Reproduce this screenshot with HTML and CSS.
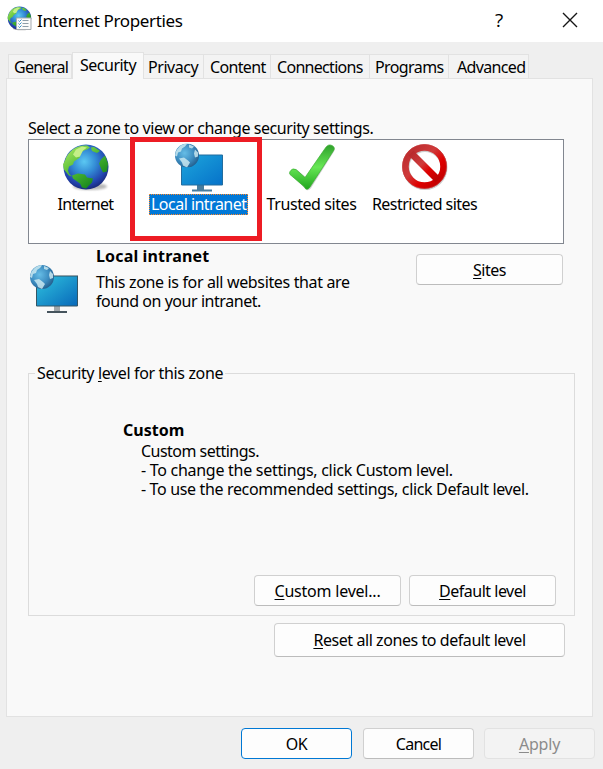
FILE: index.html
```html
<!DOCTYPE html>
<html lang="en">
<head>
<meta charset="utf-8">
<title>Internet Properties</title>
<link rel="stylesheet" href="styles.css">
</head>
<body>
<svg width="0" height="0" class="defs" aria-hidden="true">
  <defs>
    <radialGradient id="ocean" cx=".46" cy=".38" r=".65"><stop offset="0" stop-color="#5bc8f2"/><stop offset=".4" stop-color="#338bd5"/><stop offset=".78" stop-color="#2142ad"/><stop offset="1" stop-color="#18256f"/></radialGradient>
    <linearGradient id="land" x2=".8" y2="1"><stop offset="0" stop-color="#b4ed67"/><stop offset=".5" stop-color="#4cb832"/><stop offset="1" stop-color="#087817"/></linearGradient>
    <radialGradient id="pale" cx=".4" cy=".4" r=".65"><stop offset="0" stop-color="#66bde6"/><stop offset=".6" stop-color="#3c8cc0"/><stop offset="1" stop-color="#235d8b"/></radialGradient>
    <linearGradient id="screen" x2="1" y2="1"><stop offset="0" stop-color="#2fc3df"/><stop offset="1" stop-color="#0868b9"/></linearGradient>
    <linearGradient id="screenSelected" x2="1" y2="1"><stop offset="0" stop-color="#1da6dc"/><stop offset="1" stop-color="#0672c9"/></linearGradient>
    <linearGradient id="tick" x2="0" y2="1"><stop offset="0" stop-color="#30a12c"/><stop offset=".5" stop-color="#67e755"/><stop offset="1" stop-color="#20a51d"/></linearGradient>
    <linearGradient id="red" x2="1" y2="1"><stop offset="0" stop-color="#b7292c"/><stop offset=".4" stop-color="#cf3b3b"/><stop offset=".65" stop-color="#df0000"/><stop offset="1" stop-color="#b90000"/></linearGradient>
    <filter id="soft" x="-20%" y="-100%" width="140%" height="300%"><feGaussianBlur stdDeviation="1.2"/></filter>
    <symbol id="globe" viewBox="0 0 48 48">
      <ellipse cx="28" cy="43" rx="17" ry="3.5" fill="#888" opacity=".6" filter="url(#soft)"/>
      <circle cx="24" cy="23.5" r="22.5" fill="url(#ocean)"/>
      <path d="M3 17C6 7 16 1 25 2l3 2-3 2-3 1-5 3 1 4-6 4-1 3-4 2-1 4 1 3 3 3-3-1-5-6-1-5zM10 32l6-2 7 1 2 3 6 1-1 4-6 6-4-1-2-4-7-5zM39 16l4-4 3 8-1 8-4 1-2-4-2-5zM29 4l3-.5 6 4-3 2-5-2z" fill="url(#land)"/>
      <path d="M14 6l6-3 5 1-4 3-3 6-4 1-3-3z" fill="#c4ef88"/>
    </symbol>
    <symbol id="small-globe" viewBox="0 0 24 24">
      <circle cx="12" cy="12" r="12" fill="url(#pale)"/>
      <path d="M1 8C4 2 9 0 12 .4L10 3 7 5 6 8 3 9 2 13 0 12zM4 15l5-1 4 3 2 2-3 5-4-2-1-3zM14 1l5 2-2 2-3-1zM20 6l3 3v4l-3 1-1-4z" fill="#d2edf3" opacity=".8"/>
    </symbol>
  </defs>
</svg>
<header class="titlebar">
  <svg class="app-icon" viewBox="0 0 25 26"><use href="#globe" width="25" height="25"/><path d="M9.500 12h14.500v11.500H9.500z" fill="#fafafa" stroke="#a5abb1"/><path d="M15.500 14.500h6M15.500 17.500h6M15.500 20.500h6" stroke="#8e9da8"/><path d="M11.500 14.500l1 1 2-2M11.500 17.500l1 1 2-2M11.500 20.500l1 1 2-2" fill="none" stroke="#368cc4"/></svg>
  <h1 class="window-title">Internet Properties</h1>
  <span class="help">?</span>
  <svg class="close" viewBox="0 0 16 16"><path d="M1 1l14 14M15 1L1 15" stroke="#151515" stroke-width="1.4"/></svg>
</header>
<main>
  <nav class="tabs">
    <span class="tab general">General</span><span class="tab active">Security</span><span class="tab privacy">Privacy</span><span class="tab content">Content</span><span class="tab connections">Connections</span><span class="tab programs">Programs</span><span class="tab advanced">Advanced</span>
  </nav>
  <section class="panel">
    <p class="prompt">Select a zone to view or change security settings.</p>
    <div class="zones">
      <div class="zone internet"><svg viewBox="0 0 48 48"><use href="#globe" width="48" height="48"/></svg><span>Internet</span></div>
      <div class="zone selected"><svg viewBox="0 0 48 48"><path d="M17 46h20v2H17zM22 41h7v6h-7z" fill="#477c9d"/><path d="M6.500 11.500h41v30h-41z" fill="url(#screenSelected)" stroke="#236d9e"/><use href="#small-globe" width="24" height="24"/></svg><span>Local intranet</span></div>
      <div class="zone trusted"><svg viewBox="0 0 48 48"><path d="M3 27Q5 23 9 26l8 7L38 4q3-4 6-2t1 5L23 42q-4 7-8 1L2 30z" fill="#777" opacity=".35" transform="translate(1 1)"/><path d="M2 28Q4 24 8 26l9 8L37 5q3-5 7-3t1 6L23 42q-4 7-7 1L2 31q-1-1 0-3z" fill="url(#tick)" stroke="#39ad30" stroke-width=".7"/></svg><span>Trusted sites</span></div>
      <div class="zone restricted"><svg viewBox="0 0 48 48"><circle cx="24" cy="24" r="19" fill="none" stroke="#999" stroke-width="7" opacity=".5"/><circle cx="23.500" cy="23" r="19" fill="none" stroke="url(#red)" stroke-width="6.500"/><path d="M10 9.500l27 27" stroke="url(#red)" stroke-width="7"/><circle cx="23.500" cy="23" r="22" fill="none" stroke="#c93a3a" stroke-width=".7"/></svg><span>Restricted sites</span></div>
      <i class="highlight"></i>
    </div>
    <div class="description">
      <svg class="description-icon" viewBox="0 0 48 48"><path d="M24 41h6v5h-6z" fill="#a0a6aa"/><path d="M17 46h20v2H17z" fill="#46545d"/><path d="M6.500 11h41v30h-41z" fill="url(#screen)" stroke="#345666"/><path d="M6 10.500h42" stroke="#96a2a8"/><use href="#small-globe" width="24" height="24"/></svg>
      <div class="description-copy"><h2>Local intranet</h2><p><span class="desc-one">This zone is for all websites that are</span><span class="desc-two">found on your intranet.</span></p></div>
      <button class="sites"><u>S</u>ites</button>
    </div>
    <fieldset>
      <legend>Security <u>l</u>evel for this zone</legend>
      <h2>Custom</h2>
      <p class="settings"><span class="set-one">Custom settings.</span><span class="set-two">- To change the settings, click Custom level.</span><span class="set-three">- To use the recommended settings, click Default level.</span></p>
      <div class="level-buttons"><button class="custom-level"><u>C</u>ustom level...</button><button class="default-level"><u>D</u>efault level</button></div>
    </fieldset>
    <button class="reset"><u>R</u>eset all zones to default level</button>
  </section>
  <footer><button class="ok">OK</button><button class="cancel">Cancel</button><button class="apply" disabled><u>A</u>pply</button></footer>
</main>
</body>
</html>
```
FILE: styles.css
```css
* { box-sizing: border-box; }
body { margin: 0; width: 603px; height: 769px; overflow: hidden; background: #efefef; color: #000; font: 16px/19px "Noto Sans", sans-serif; }
.defs { position: absolute; }
h1, h2, p { margin: 0; font-size: 16px; }
.titlebar { height: 42px; background: #fff; display: flex; padding-left: 7px; }
.app-icon { width: 25px; height: 26px; margin-top: 6px; }
.window-title { font: 17px/24px "Noto Sans", sans-serif; margin: 9px 0 0 5px; width: 458px; letter-spacing: -.35px; }
.help { font: 19px/24px "Open Sans", sans-serif; margin-top: 8px; width: 67px; }
.close { width: 16px; height: 16px; margin-top: 12px; }
main { padding: 10px 10px 0 6px; }
.tabs { height: 27px; padding-left: 2px; display: flex; align-items: flex-end; }
.tab { height: 25px; border: 1px solid #e2e2e2; border-left-width: 0; background: #f3f3f3; line-height: 25px; white-space: nowrap; }
.general { width: 64px; border-left-width: 1px; padding-left: 5px; letter-spacing: -.68px; }
.active { width: 72px; height: 27px; background: #f9f9f9; border-left-width: 1px; border-bottom: 0; padding-left: 7px; letter-spacing: -.5px; position: relative; }
.privacy { width: 60px; padding-left: 4px; letter-spacing: -.45px; }
.content { width: 67px; padding-left: 6px; letter-spacing: -.65px; }
.connections { width: 99px; padding-left: 6px; letter-spacing: -.7px; }
.programs { width: 79px; padding-left: 5px; letter-spacing: -.6px; }
.advanced { width: 80px; padding-left: 8px; letter-spacing: -.65px; }
.panel { width: 587px; height: 639px; margin-top: -1px; border: 1px solid #e2e2e2; background: #f9f9f9; padding: 40px 0 0 21px; }
.prompt { height: 20px; white-space: nowrap; letter-spacing: -.42px; }
.zones { width: 536px; height: 105px; border: 1px solid #828790; background: #fff; display: flex; position: relative; }
.zone { width: 113px; display: flex; flex-direction: column; align-items: center; padding-top: 3px; }
.zone svg { width: 48px; height: 49px; overflow: visible; }
.zone span { line-height: 21px; margin-top: 2px; white-space: nowrap; }
.internet span { letter-spacing: -.7px; }
.selected span { background: #0078d7; color: #fff; outline: 1px dotted #ff8728; outline-offset: -1px; width: 99px; padding-left: 2px; letter-spacing: -.52px; }
.trusted span { letter-spacing: -.42px; }
.restricted span { letter-spacing: -.55px; }
.highlight { position: absolute; left: 101px; top: -3px; width: 132px; height: 104px; border: 5px solid #ed1c24; }
.description { display: flex; height: 129px; }
.description-icon { width: 48px; height: 48px; margin: 21px 18px 0 2px; }
.description-copy { width: 320px; padding-top: 3px; white-space: nowrap; }
.description-copy h2 { letter-spacing: .15px; }
.description-copy p { margin-top: 7px; }
.description-copy span, .settings span { display: block; }
.desc-one { letter-spacing: -.35px; }
.desc-two { letter-spacing: -.45px; }
button { font: inherit; color: inherit; width: 147px; height: 31px; padding: 1px 0 0; border: 1px solid #d0d0d0; border-bottom-color: #bcbcbc; border-radius: 4px; background: #fdfdfd; white-space: nowrap; }
u { text-decoration-thickness: 1px; text-underline-offset: 2px; }
.sites { margin-top: 10px; letter-spacing: -.5px; }
fieldset { margin: -9px 0 0; padding: 0; width: 547px; min-width: 0; height: 252px; border: 1px solid #dcdcdc; }
legend { margin-left: 6px; padding: 0 2px; white-space: nowrap; letter-spacing: -.36px; }
fieldset h2 { margin: 38px 0 0 94px; }
.settings { margin: 2px 0 0 112px; white-space: nowrap; }
.set-one { letter-spacing: -.52px; }
.set-two { letter-spacing: -.28px; }
.set-three { letter-spacing: -.35px; }
.level-buttons { display: flex; gap: 8px; margin: 76px 0 0 225px; }
.custom-level { letter-spacing: -.22px; }
.default-level { letter-spacing: -.5px; }
.reset { display: block; width: 291px; height: 34px; margin: 7px 0 0 246px; letter-spacing: -.43px; }
footer { display: flex; justify-content: flex-end; gap: 11px; padding: 11px 0 0; margin-right: -2px; }
footer button { width: 111px; }
footer .apply { margin-left: -1px; background: #f3f3f3; border-color: #e2e2e2; color: #8b8b8b; letter-spacing: -.2px; }
.ok { border-color: #0078d4; letter-spacing: -.4px; }
.cancel { letter-spacing: -.75px; }
```
